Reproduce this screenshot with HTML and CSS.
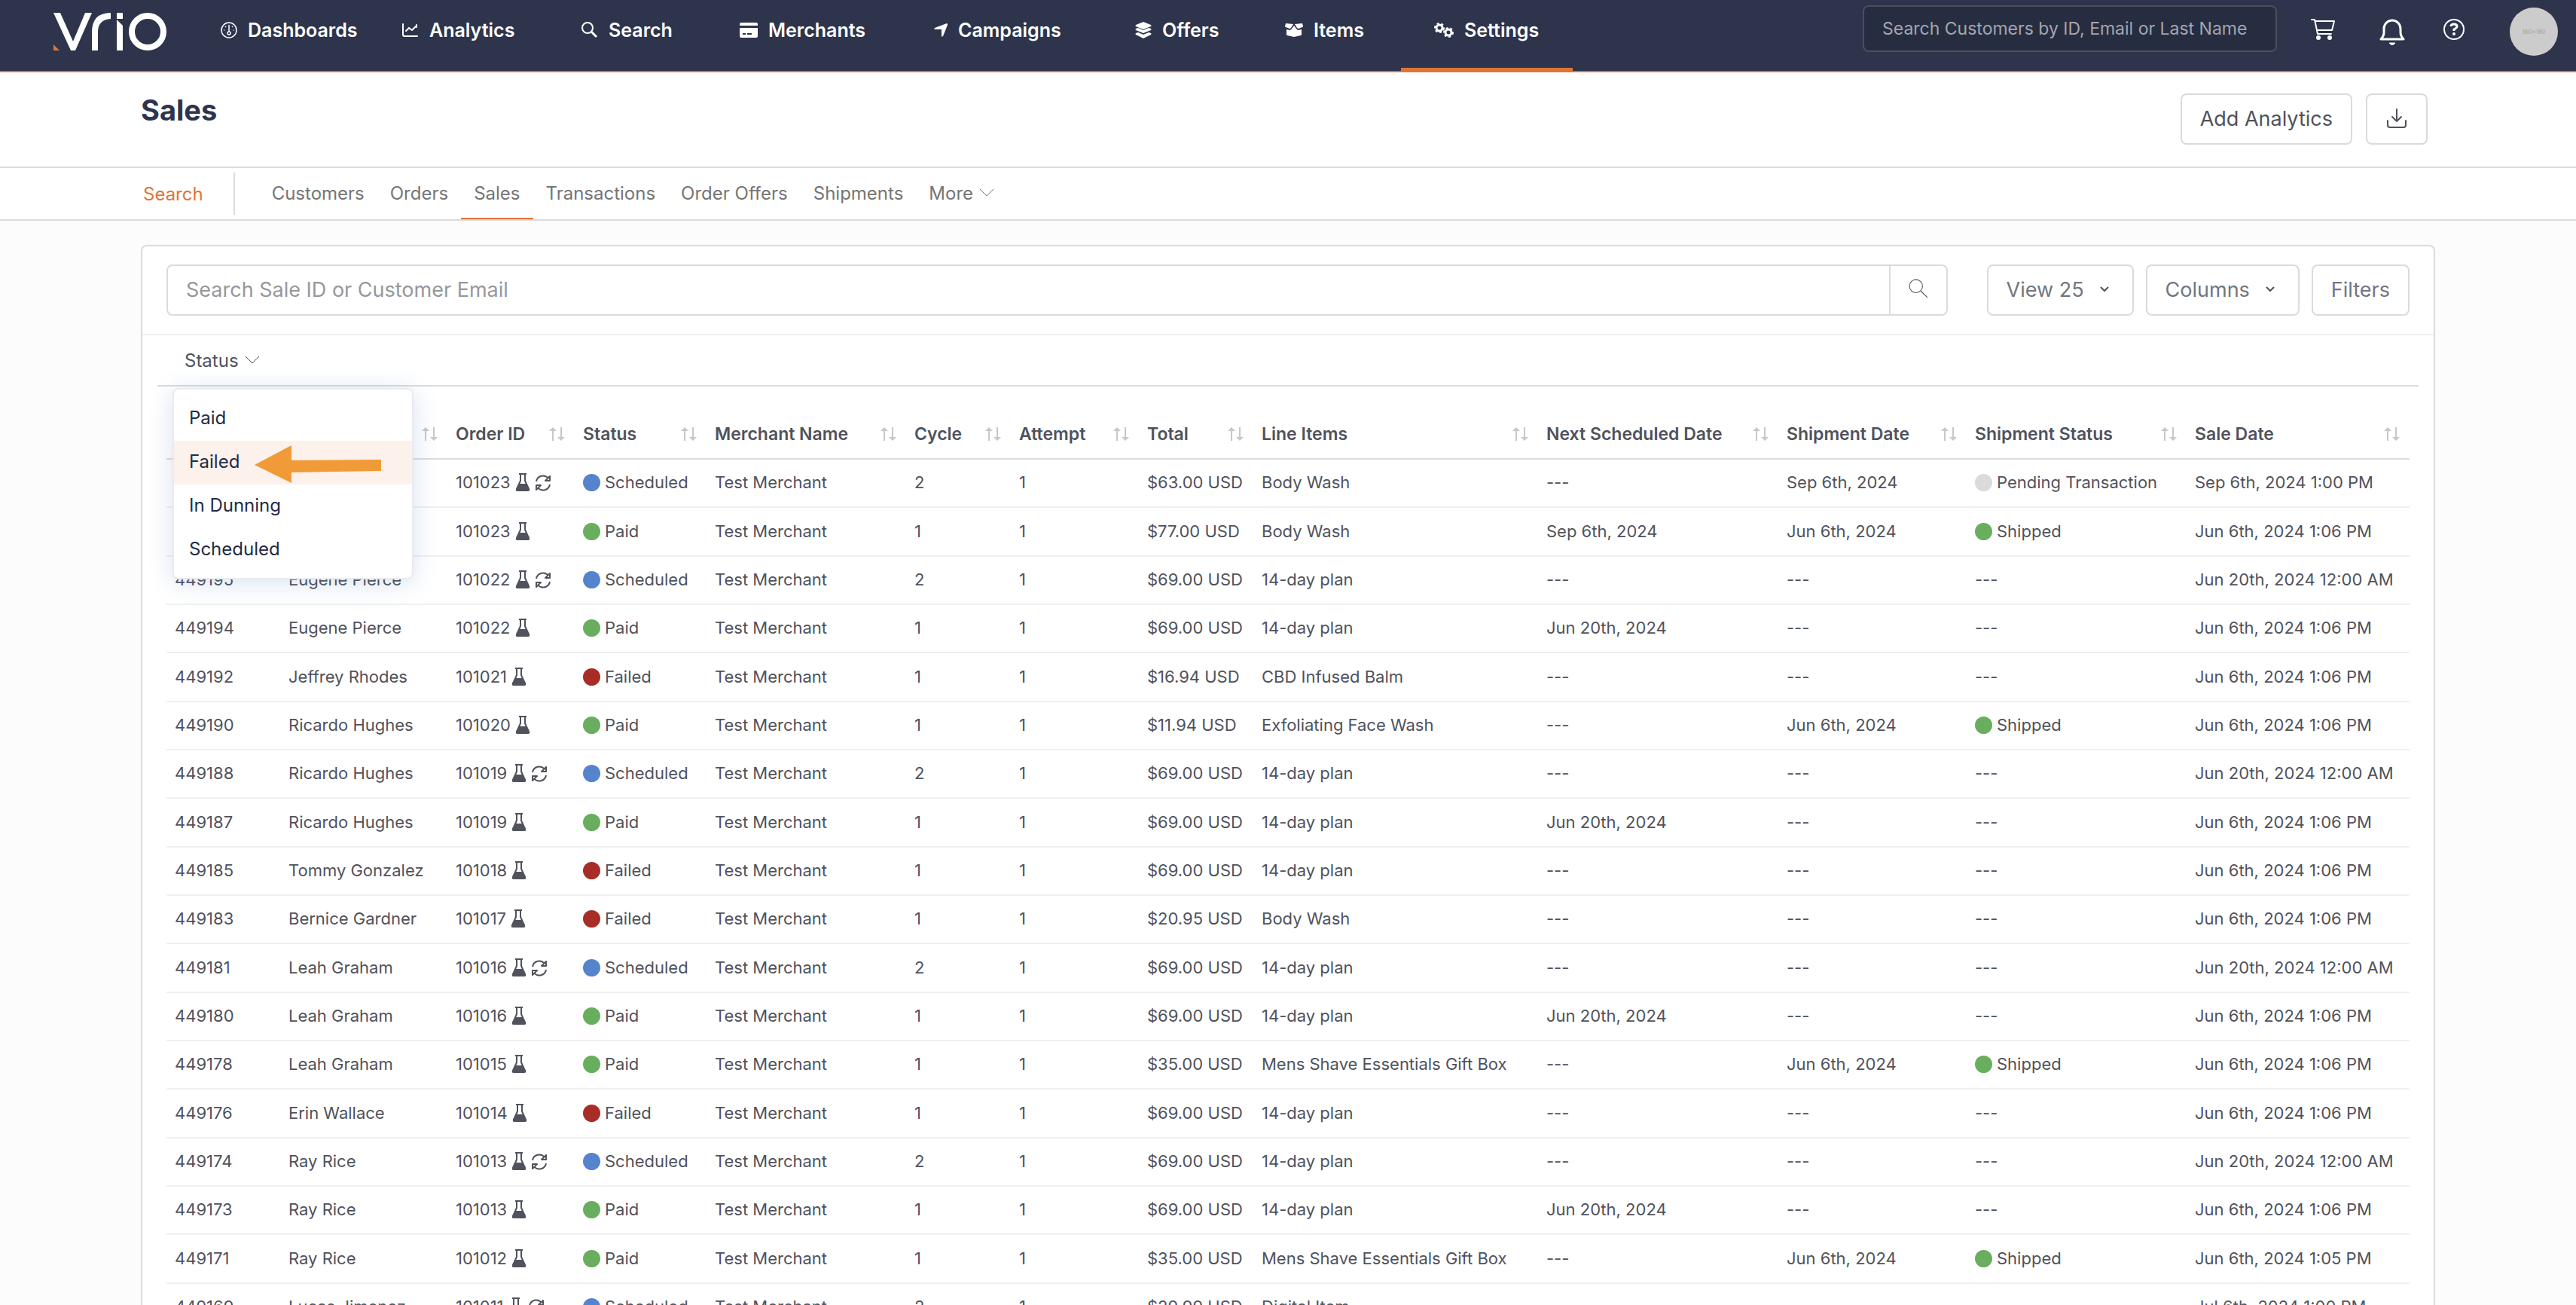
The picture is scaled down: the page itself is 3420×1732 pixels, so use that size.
FILE: index.html
```html
<!DOCTYPE html>
<html lang="en">
<head>
<meta charset="UTF-8">
<meta name="viewport" content="width=device-width, initial-scale=1.0">
<title>Sales</title>
<link rel="stylesheet" href="styles.css">
</head>
<body>

<!-- shared icons -->
<svg class="sprite" aria-hidden="true">
  <symbol id="i-sort" viewBox="0 0 22 18">
    <path d="M5 18V4M16 0v14" stroke="currentColor" stroke-width="2" fill="none"/>
    <path d="M0 5l5-5 5 5zM11 13l5 5 5-5z" fill="currentColor"/>
  </symbol>
  <symbol id="i-flask" viewBox="0 0 20 24">
    <path d="M5 1h10M7 1v9L2 21h16l-5-11V1" fill="none" stroke="currentColor" stroke-width="2" stroke-linejoin="round"/>
    <path d="M5 14h10l4 7q1 3-2 3H3q-3 0-2-3z" fill="currentColor"/>
  </symbol>
  <symbol id="i-refresh" viewBox="0 0 22 22">
    <path d="M2 9A9 9 0 0 1 18 5M20 2v6h-6zM20 13A9 9 0 0 1 4 17M2 20v-6h6z" fill="none" stroke="currentColor" stroke-width="2" stroke-linejoin="round"/>
  </symbol>
  <symbol id="i-chevron" viewBox="0 0 20 12">
    <path d="M1 1l9 9 9-9" fill="none" stroke="currentColor"/>
  </symbol>
  <symbol id="i-search" viewBox="0 0 24 24">
    <circle cx="9" cy="9" r="8" fill="none" stroke="currentColor"/>
    <path d="M15 15l8 8" fill="none" stroke="currentColor"/>
  </symbol>
</svg>

<header class="topbar">
  <a href="#" class="logo" aria-label="Vrio">
    <svg width="152" height="50" viewBox="0 0 152 50">
      <path d="M0 0h9l17 38L42 0h9L29 50h-6z" fill="#fff"/>
      <path d="M51 50V26Q51 0 76 0v8Q59 9 59 26v24zM84 0h8v8h-8zM84 9l8 8v33h-8z" fill="#fff"/>
      <circle cx="125" cy="25" r="21" fill="none" stroke="#fff" stroke-width="8"/>
      <path d="M0 42l8 8H0z" fill="#e07438"/>
    </svg>
  </a>
  <nav class="main-nav">
    <a href="#">
      <svg width="22" height="22" viewBox="0 0 22 22" fill="none" stroke="currentColor"><circle cx="11" cy="11" r="10" stroke-width="1.5"/><circle cx="11" cy="15" r="2" stroke-width="1.5"/><path d="M11 4v9" stroke-width="1.5"/><path d="M4 11h1M17 11h1M6 6l1 1M16 6l-1 1" stroke-width="1.5"/></svg>
      Dashboards
    </a>
    <a href="#">
      <svg width="22" height="20" viewBox="0 0 22 20" fill="none" stroke="currentColor" stroke-width="2" stroke-linecap="round"><path d="M1 2v14q0 2 2 2h17M5 11l4-4 4 3 6-6M19 3v3"/></svg>
      Analytics
    </a>
    <a href="#">
      <svg width="22" height="22" viewBox="0 0 22 22" fill="none" stroke="currentColor" stroke-width="2"><circle cx="8" cy="8" r="7"/><path d="M13 13l7 7" stroke-width="3"/></svg>
      Search
    </a>
    <a href="#">
      <svg width="24" height="20" viewBox="0 0 24 20" fill="currentColor"><path d="M2 0h20q2 0 2 2v2H0V2q0-2 2-2z"/><path fill-rule="evenodd" d="M0 7h24v11q0 2-2 2H2q-2 0-2-2zm4 7v2h4v-2zm6 0v2h6v-2z"/></svg>
      Merchants
    </a>
    <a href="#">
      <svg width="18" height="18" viewBox="0 0 18 18" fill="currentColor"><path d="M17 0q1 0 1 2l-6 15q-2 2-2-1V8H2q-3 0-1-2z"/></svg>
      Campaigns
    </a>
    <a href="#">
      <svg width="22" height="22" viewBox="0 0 22 22" fill="currentColor"><path d="M11 0l10 4q1 1 0 2l-10 4L1 6Q0 5 1 4zM1 9l3-1 7 3 7-3 3 1q1 1 0 2l-10 4L1 11Q0 10 1 9zM1 15l3-1 7 3 7-3 3 1q1 1 0 2l-10 5-10-5q-1-1 0-2z"/></svg>
      Offers
    </a>
    <a href="#">
      <svg width="24" height="20" viewBox="0 0 24 20" fill="currentColor"><path d="M1 1l10 1-3 5q-1 1-2 1L1 6Q0 6 0 5zM23 1l-10 1 3 5q1 1 2 1l5-2q1 0 1-1zM12 4l3 4q1 2 3 2l4-1v7q0 1-1 1l-9 2-9-2q-1 0-1-1V9l4 1q2 0 3-2z"/></svg>
      Items
    </a>
    <a href="#" class="active">
      <svg width="26" height="20" viewBox="0 0 26 20" fill="none" stroke="currentColor"><circle cx="7" cy="7" r="4" stroke-width="3"/><circle cx="7" cy="7" r="6" stroke-width="2" stroke-dasharray="3 3"/><circle cx="19" cy="13" r="4" stroke-width="3"/><circle cx="19" cy="13" r="6" stroke-width="2" stroke-dasharray="3 3"/></svg>
      Settings
    </a>
  </nav>
  <input type="text" class="global-search" aria-label="Search customers" placeholder="Search Customers by ID, Email or Last Name">
  <button type="button" class="icon-btn" aria-label="Cart">
    <svg width="32" height="30" viewBox="0 0 32 30" fill="none" stroke="#fff" stroke-width="2" stroke-linecap="round" stroke-linejoin="round"><path d="M1 2h4l4 19h18M6 4h25l-3 12H8"/><circle cx="10" cy="26" r="2" fill="#fff"/><circle cx="25" cy="26" r="2" fill="#fff"/></svg>
  </button>
  <button type="button" class="icon-btn bell" aria-label="Notifications">
    <svg width="34" height="38" viewBox="0 0 34 38" fill="none" stroke="#fff" stroke-width="3" stroke-linejoin="round"><path d="M2 28q4-4 4-9v-5a11 11 0 0 1 22 0v5q0 5 4 9z"/><path d="M13 33q4 5 8 0z" fill="#fff" stroke-width="1"/></svg>
  </button>
  <button type="button" class="icon-btn" aria-label="Help">
    <svg width="30" height="30" viewBox="0 0 30 30" fill="none" stroke="#fff" stroke-width="2"><circle cx="15" cy="15" r="13"/><path d="M11 11q0-3 4-3t4 3q0 2-4 4v2" stroke-width="3"/><circle cx="15" cy="21" r="1"/></svg>
  </button>
  <a href="#" class="avatar">160×160</a>
</header>

<div class="page-head">
  <h1>Sales</h1>
  <button type="button" class="btn btn-dark">Add Analytics</button>
  <button type="button" class="btn btn-icon" aria-label="Download">
    <svg width="26" height="26" viewBox="0 0 26 26" fill="none" stroke="currentColor" stroke-width="2" stroke-linecap="round" stroke-linejoin="round"><path d="M13 1v16M7 11l6 6 6-6M1 16v6q0 3 3 3h18q3 0 3-3v-6"/></svg>
  </button>
</div>

<nav class="tabs">
  <a href="#" class="tab-main">Search</a>
  <a href="#">Customers</a>
  <a href="#">Orders</a>
  <a href="#" class="active">Sales</a>
  <a href="#">Transactions</a>
  <a href="#">Order Offers</a>
  <a href="#">Shipments</a>
  <a href="#">More <svg class="chevron"><use href="#i-chevron"/></svg></a>
</nav>

<main class="card">
  <div class="toolbar">
    <form class="search-box">
      <input type="text" aria-label="Search sales" placeholder="Search Sale ID or Customer Email">
      <button type="button" aria-label="Search"><svg width="26" height="26"><use href="#i-search"/></svg></button>
    </form>
    <button type="button" class="btn">View 25 <svg class="caret" viewBox="0 0 14 10"><path d="M2 2l5 5 5-5"/></svg></button>
    <button type="button" class="btn">Columns <svg class="caret" viewBox="0 0 14 10"><path d="M2 2l5 5 5-5"/></svg></button>
    <button type="button" class="btn">Filters</button>
  </div>

  <div class="filter-row">
    <button type="button" class="filter">Status <svg class="chevron"><use href="#i-chevron"/></svg></button>
    <div class="menu">
      <a href="#">Paid</a>
      <a href="#" class="hover">Failed
        <svg class="pointer" width="168" height="50" viewBox="0 0 168 50"><path d="M0 26L49 0v20l119-1v15L49 36v14z" fill="#f19a38"/></svg>
      </a>
      <a href="#">In Dunning</a>
      <a href="#">Scheduled</a>
    </div>
  </div>

  <table class="sales">
    <colgroup>
      <col class="c-id"><col class="c-name"><col class="c-order"><col class="c-status"><col class="c-merchant">
      <col class="c-cycle"><col class="c-attempt"><col class="c-total"><col class="c-items"><col class="c-next">
      <col class="c-shipdate"><col class="c-shipstatus"><col class="c-date">
    </colgroup>
    <thead><tr id="head"></tr></thead>
    <tbody id="rows"></tbody>
  </table>
</main>

<script>
  const heads = ['Sale ID', 'Customer', 'Order ID', 'Status', 'Merchant Name', 'Cycle', 'Attempt', 'Total',
    'Line Items', 'Next Scheduled Date', 'Shipment Date', 'Shipment Status', 'Sale Date'];

  // id, customer, order, status, total, item, next date, ship date, ship status, sale date
  const sales = [
    ['449197', 'Eugene Pierce', '101023', 'Scheduled', '63.00', 'Body Wash', '', 'Sep 6th, 2024', 'Pending Transaction', 'Sep 6th, 2024 1:00 PM'],
    ['449196', 'Eugene Pierce', '101023', 'Paid', '77.00', 'Body Wash', 'Sep 6th, 2024', 'Jun 6th, 2024', 'Shipped', 'Jun 6th, 2024 1:06 PM'],
    ['449195', 'Eugene Pierce', '101022', 'Scheduled', '69.00', '14-day plan', '', '', '', 'Jun 20th, 2024 12:00 AM'],
    ['449194', 'Eugene Pierce', '101022', 'Paid', '69.00', '14-day plan', 'Jun 20th, 2024', '', '', 'Jun 6th, 2024 1:06 PM'],
    ['449192', 'Jeffrey Rhodes', '101021', 'Failed', '16.94', 'CBD Infused Balm', '', '', '', 'Jun 6th, 2024 1:06 PM'],
    ['449190', 'Ricardo Hughes', '101020', 'Paid', '11.94', 'Exfoliating Face Wash', '', 'Jun 6th, 2024', 'Shipped', 'Jun 6th, 2024 1:06 PM'],
    ['449188', 'Ricardo Hughes', '101019', 'Scheduled', '69.00', '14-day plan', '', '', '', 'Jun 20th, 2024 12:00 AM'],
    ['449187', 'Ricardo Hughes', '101019', 'Paid', '69.00', '14-day plan', 'Jun 20th, 2024', '', '', 'Jun 6th, 2024 1:06 PM'],
    ['449185', 'Tommy Gonzalez', '101018', 'Failed', '69.00', '14-day plan', '', '', '', 'Jun 6th, 2024 1:06 PM'],
    ['449183', 'Bernice Gardner', '101017', 'Failed', '20.95', 'Body Wash', '', '', '', 'Jun 6th, 2024 1:06 PM'],
    ['449181', 'Leah Graham', '101016', 'Scheduled', '69.00', '14-day plan', '', '', '', 'Jun 20th, 2024 12:00 AM'],
    ['449180', 'Leah Graham', '101016', 'Paid', '69.00', '14-day plan', 'Jun 20th, 2024', '', '', 'Jun 6th, 2024 1:06 PM'],
    ['449178', 'Leah Graham', '101015', 'Paid', '35.00', 'Mens Shave Essentials Gift Box', '', 'Jun 6th, 2024', 'Shipped', 'Jun 6th, 2024 1:06 PM'],
    ['449176', 'Erin Wallace', '101014', 'Failed', '69.00', '14-day plan', '', '', '', 'Jun 6th, 2024 1:06 PM'],
    ['449174', 'Ray Rice', '101013', 'Scheduled', '69.00', '14-day plan', '', '', '', 'Jun 20th, 2024 12:00 AM'],
    ['449173', 'Ray Rice', '101013', 'Paid', '69.00', '14-day plan', 'Jun 20th, 2024', '', '', 'Jun 6th, 2024 1:06 PM'],
    ['449171', 'Ray Rice', '101012', 'Paid', '35.00', 'Mens Shave Essentials Gift Box', '', 'Jun 6th, 2024', 'Shipped', 'Jun 6th, 2024 1:05 PM'],
    ['449169', 'Lucas Jimenez', '101011', 'Scheduled', '29.99', 'Digital Item', '', '', '', 'Jul 6th, 2024 1:00 PM']
  ];

  const icon = name => `<svg class="${name}"><use href="#i-${name}"/></svg>`;
  const dot = text => text ? `<span class="dot ${text.split(' ')[0].toLowerCase()}"></span>${text}` : '---';

  document.getElementById('head').innerHTML = heads
    .map(h => `<th scope="col"><div>${h}${icon('sort')}</div></th>`).join('');

  document.getElementById('rows').innerHTML = sales.map(s => {
    const scheduled = s[3] === 'Scheduled';
    return `<tr>
      <td>${s[0]}</td>
      <td>${s[1]}</td>
      <td>${s[2]} ${icon('flask')}${scheduled ? icon('refresh') : ''}</td>
      <td>${dot(s[3])}</td>
      <td>Test Merchant</td>
      <td>${scheduled ? 2 : 1}</td>
      <td>1</td>
      <td>$${s[4]} USD</td>
      <td>${s[5]}</td>
      <td>${s[6] || '---'}</td>
      <td>${s[7] || '---'}</td>
      <td>${dot(s[8])}</td>
      <td>${s[9]}</td>
    </tr>`;
  }).join('');
</script>

</body>
</html>
```

FILE: styles.css
```css
* {
  box-sizing: border-box;
}
body {
  margin: 0;
  height: 100vh;
  overflow: hidden;
  background-color: #fcfcfc;
  font-family: Inter, "Open Sans", sans-serif;
  font-size: 22px;
  color: #50525c;
}
a {
  color: inherit;
  text-decoration: none;
}
button, input {
  font: inherit;
  color: inherit;
}
button {
  padding: 0;
  border: none;
  background: none;
  cursor: pointer;
}
svg {
  flex: none;
}
.sprite {
  display: none;
}

/* top bar */
.topbar {
  display: flex;
  align-items: flex-start;
  height: 96px;
  padding: 0 24px 0 71px;
  background-color: #2d344c;
  border-bottom: 2px solid #e07438;
  color: #fff;
}
.logo {
  margin-top: 17px;
  width: 178px;
}
.main-nav {
  display: grid;
  grid-template-columns: 241px 238px 210px 258px 267px 199px 198px 228px;
  margin-right: auto;
}
.main-nav a {
  display: flex;
  align-items: center;
  gap: 14px;
  height: 96px;
  padding: 0 0 16px 44px;
  font-size: 25px;
  font-weight: 600;
  white-space: nowrap;
}
.main-nav .active {
  border-bottom: 6px solid #e07438;
  padding-bottom: 10px;
}
.global-search {
  width: 550px;
  height: 62px;
  margin: 7px 45px 0 0;
  padding: 0 24px;
  background-color: #272d41;
  border: 2px solid #4c4f59;
  border-radius: 8px;
  outline: none;
  font-size: 23px;
}
.global-search::placeholder {
  color: #a4a6ad;
}
.icon-btn {
  margin: 24px 59px 0 0;
}
.bell {
  margin-right: 50px;
}
.icon-btn svg {
  display: block;
}
.avatar {
  display: flex;
  align-items: center;
  justify-content: center;
  width: 64px;
  height: 64px;
  margin-top: 10px;
  border-radius: 50%;
  background-color: #ccc;
  color: #a5a5a5;
  font-size: 8px;
}

/* page title */
.page-head {
  display: flex;
  gap: 18px;
  height: 127px;
  padding: 28px 197px 0 187px;
  background-color: #fff;
  border-bottom: 2px solid #dbdbdb;
}
h1 {
  margin: 0 auto 0 0;
  font-size: 38px;
  line-height: 44px;
  color: #2d344c;
}
.btn {
  display: flex;
  align-items: center;
  gap: 20px;
  height: 68px;
  padding: 0 24px 2px;
  background-color: #fff;
  border: 2px solid #dbdbdb;
  border-radius: 8px;
  font-size: 27px;
  color: #717680;
}
.btn-dark, .btn-icon {
  color: #50525c;
}
.btn-icon {
  width: 82px;
  justify-content: center;
}

/* tabs */
.tabs {
  display: flex;
  align-items: center;
  height: 70px;
  padding-left: 190px;
  background-color: #fff;
  border-bottom: 2px solid #dbdbdb;
  font-size: 24px;
  color: #757575;
}
.tabs a {
  display: flex;
  align-items: center;
  gap: 8px;
  height: 68px;
  padding: 0 17px 2px;
}
.tabs .tab-main {
  height: 56px;
  margin-right: 32px;
  padding: 0 40px 0 0;
  border-right: 2px solid #dbdbdb;
  color: #e07438;
}
.tabs .active {
  padding-bottom: 0;
  border-bottom: 2px solid #e07438;
}
.chevron {
  width: 20px;
  height: 12px;
  stroke-width: 1;
}
.caret {
  width: 14px;
  height: 10px;
  margin-right: 6px;
  fill: none;
  stroke: #50525c;
  stroke-width: 2;
}

/* card */
.card {
  margin: 32px 187px 0;
  background-color: #fff;
  border: 2px solid #dbdbdb;
  border-radius: 8px;
}
.toolbar {
  display: flex;
  gap: 16px;
  padding: 24px 32px;
  border-bottom: 2px solid #f0f0f0;
}
.search-box {
  display: flex;
  flex: 1;
  height: 68px;
  margin-right: 36px;
  border: 2px solid #dbdbdb;
  border-radius: 8px;
}
.search-box input {
  flex: 1;
  padding: 0 24px 2px;
  border: none;
  background: none;
  outline: none;
  font-size: 27px;
}
.search-box input::placeholder {
  color: #96979c;
}
.search-box button {
  width: 76px;
  border-left: 2px solid #dbdbdb;
}
.filter-row {
  position: relative;
  margin: 0 20px;
  border-bottom: 2px solid #dbdbdb;
  font-size: 24px;
}
.filter {
  display: flex;
  align-items: center;
  gap: 8px;
  height: 66px;
  padding-left: 36px;
}
.menu {
  position: absolute;
  top: 70px;
  left: 20px;
  width: 320px;
  padding: 10px 0 8px;
  background-color: #fff;
  border: 2px solid #e9ebef;
  border-radius: 8px;
  box-shadow: 0 4px 32px rgba(60, 110, 180, 0.2);
  color: #222b45;
}
.menu a {
  position: relative;
  display: block;
  padding: 0 20px 2px;
  line-height: 56px;
}
.menu .hover {
  background-color: #fdf1eb;
}
.pointer {
  position: absolute;
  top: 6px;
  left: 107px;
}

/* table */
.sales {
  width: calc(100% - 64px);
  margin: 0 32px;
  table-layout: fixed;
  border-collapse: separate;
  border-spacing: 0;
  white-space: nowrap;
}
th {
  height: 97px;
  padding: 30px 12px 0 11px;
  border-bottom: 2px solid #dbdbdb;
  font-size: 23px;
  font-weight: 600;
  text-align: left;
}
th div {
  display: flex;
  align-items: center;
  justify-content: space-between;
}
td {
  height: 64px;
  padding: 0 0 2px 11px;
  border-bottom: 2px solid #f0f0f0;
}
tr:nth-child(3n+2) td {
  height: 65px;
}
.sort {
  width: 22px;
  height: 18px;
  color: #c8c8c8;
}
.flask {
  width: 20px;
  height: 24px;
  vertical-align: -4px;
}
.refresh {
  width: 22px;
  height: 22px;
  margin-left: 6px;
  vertical-align: -4px;
}
.dot {
  display: inline-block;
  width: 23px;
  height: 23px;
  margin-right: 6px;
  border-radius: 50%;
  vertical-align: -4px;
}
.scheduled { background-color: #5584cd; }
.paid, .shipped { background-color: #69ae5e; }
.failed { background-color: #a82d26; }
.pending { background-color: #dcdadb; }

.c-id { width: 151px; }
.c-name { width: 222px; }
.c-order { width: 169px; }
.c-status { width: 175px; }
.c-merchant { width: 265px; }
.c-cycle { width: 139px; }
.c-attempt { width: 170px; }
.c-total { width: 152px; }
.c-items { width: 378px; }
.c-next { width: 319px; }
.c-shipdate { width: 250px; }
.c-shipstatus { width: 292px; }
.c-date { width: 296px; }
```
